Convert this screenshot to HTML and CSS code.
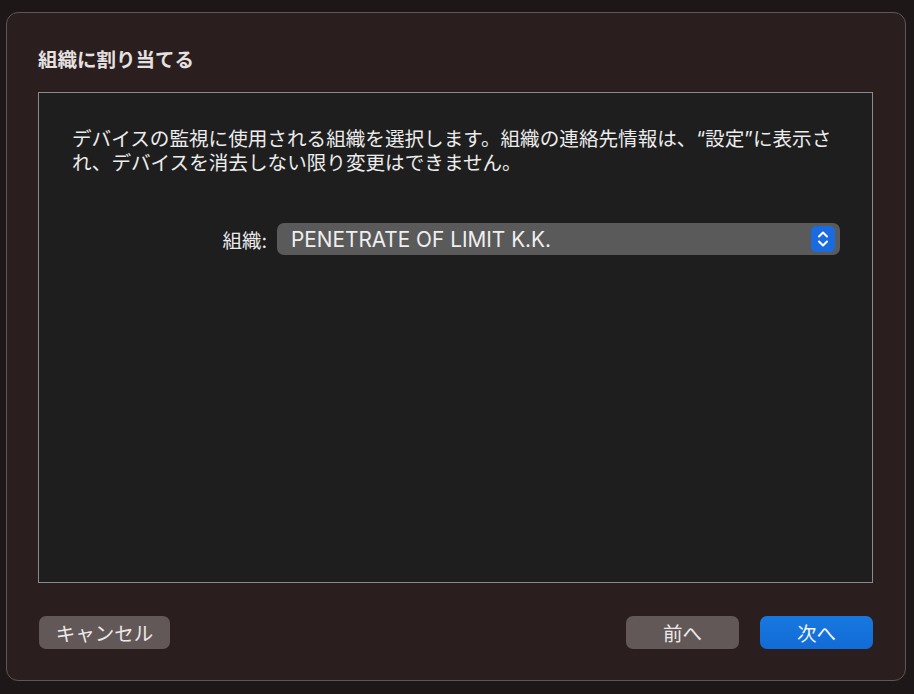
FILE: index.html
```html
<!DOCTYPE html>
<html lang="ja">
<head>
<meta charset="utf-8">
<title>組織に割り当てる</title>
<link rel="stylesheet" href="styles.css">
</head>
<body>
<div class="window">
  <h1 class="title">組織に割り当てる</h1>
  <div class="panel">
    <p class="desc">デバイスの監視に使用される組織を選択します。組織の連絡先情報は、“設定”に表示さ<br>れ、デバイスを消去しない限り変更はできません。</p>
    <div class="field">
      <span class="label">組織:</span>
      <div class="select">
        <span class="select-text">PENETRATE OF LIMIT K.K.</span>
        <span class="stepper">
          <svg width="24" height="26" viewBox="0 0 24 26"><path d="M8 10.5 L12 6.5 L16 10.5" fill="none" stroke="#fff" stroke-width="2" stroke-linecap="round" stroke-linejoin="round"/><path d="M8 15.5 L12 19.5 L16 15.5" fill="none" stroke="#fff" stroke-width="2" stroke-linecap="round" stroke-linejoin="round"/></svg>
        </span>
      </div>
    </div>
  </div>
  <div class="footer">
    <button class="btn btn-gray btn-cancel">キャンセル</button>
    <div class="nav">
      <button class="btn btn-gray">前へ</button>
      <button class="btn btn-blue">次へ</button>
    </div>
  </div>
</div>
</body>
</html>
```

FILE: styles.css
```css
html, body {
  margin: 0;
  padding: 0;
  background: #1d1817;
  height: 100%;
  overflow: hidden;
}
body {
  font-family: "Inter", "Noto Sans CJK JP", sans-serif;
  color: #ececec;
}
.window {
  box-sizing: border-box;
  margin: 12px 0 0 6px;
  width: 900px;
  height: 669px;
  border: 1px solid #5e5655;
  border-radius: 12px;
  background: #2a1e1e;
  padding: 36px 32px 0 31px;
  display: flex;
  flex-direction: column;
}
.title {
  margin: 0;
  font-size: 19.5px;
  line-height: 22px;
  font-weight: 700;
  color: #e6e1e1;
  height: 22px;
}
.panel {
  margin-top: 21px;
  box-sizing: border-box;
  height: 491px;
  border: 1px solid #8c8a8a;
  background: #1e1e1e;
  padding: 34px 20px 0 33px;
}
.desc {
  margin: 0;
  font-size: 19.6px;
  line-height: 24px;
  color: #ececec;
  white-space: nowrap;
}
.field {
  margin-top: 48px;
  display: flex;
  align-items: center;
}
.label {
  width: 195px;
  text-align: right;
  font-size: 19.5px;
  color: #ececec;
  margin-right: 10px;
}
.select {
  box-sizing: border-box;
  width: 563px;
  height: 32px;
  border-radius: 7px;
  background: #5a5a5a;
  display: flex;
  align-items: center;
  justify-content: space-between;
  padding: 0 5px 0 14px;
}
.select-text {
  font-size: 20.8px;
  color: #efefef;
}
.stepper {
  width: 24px;
  height: 26px;
  border-radius: 5px;
  background: #1b6be0;
  display: flex;
}
.footer {
  margin-top: 33px;
  display: flex;
  justify-content: space-between;
  align-items: center;
}
.nav {
  display: flex;
  gap: 21px;
}
.btn {
  box-sizing: border-box;
  height: 33px;
  width: 113px;
  border: none;
  border-radius: 7px;
  font-family: "Inter", "Noto Sans CJK JP", sans-serif;
  font-size: 19.5px;
  color: #ece8e8;
  padding: 0;
}
.btn-cancel {
  width: 131px;
  margin-left: 1px;
}
.btn-gray {
  background: #625858;
}
.btn-blue {
  background: linear-gradient(#1878e0, #126bd6);
  color: #f2f4f8;
}
```
